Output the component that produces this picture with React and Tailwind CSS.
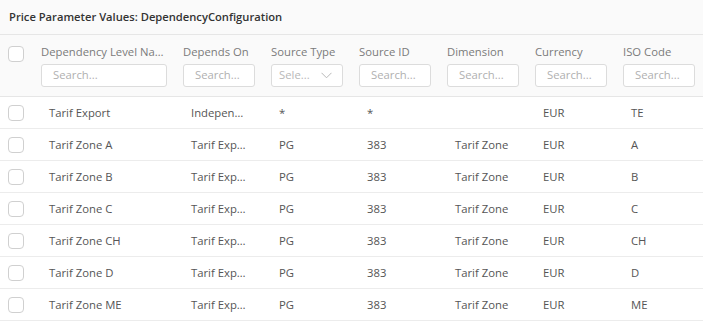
import React from "react";

const rows = [
  ["Tarif Export", "Independent", "*", "*", "", "EUR", "TE"],
  ["Tarif Zone A", "Tarif Export", "PG", "383", "Tarif Zone", "EUR", "A"],
  ["Tarif Zone B", "Tarif Export", "PG", "383", "Tarif Zone", "EUR", "B"],
  ["Tarif Zone C", "Tarif Export", "PG", "383", "Tarif Zone", "EUR", "C"],
  ["Tarif Zone CH", "Tarif Export", "PG", "383", "Tarif Zone", "EUR", "CH"],
  ["Tarif Zone D", "Tarif Export", "PG", "383", "Tarif Zone", "EUR", "D"],
  ["Tarif Zone ME", "Tarif Export", "PG", "383", "Tarif Zone", "EUR", "ME"],
];

const headers = ["Dependency Level Name", "Depends On", "Source Type", "Source ID", "Dimension", "Currency", "ISO Code"];

const grid = "grid grid-cols-[33px_142px_88px_88px_88px_88px_88px_88px]";

function Checkbox() {
  return <div className="w-4 h-4 rounded-[4px] border border-[#d0d0d0] bg-white" />;
}

function SearchBox() {
  return (
    <div className="h-[23px] w-full rounded-[3px] border border-[#dcdcdc] bg-white px-[11px] flex items-center text-[11.3px] text-[#b0b0b0] truncate">
      Search...
    </div>
  );
}

function SelectBox() {
  return (
    <div className="h-[23px] w-full rounded-[3px] border border-[#dcdcdc] bg-white pl-[7px] pr-[10px] flex items-center justify-between text-[11.3px] text-[#b8b8b8]">
      <span>Sele...</span>
      <svg width="11" height="7" viewBox="0 0 11 7" fill="none" stroke="#b8b8b8" strokeWidth="1">
        <path d="M0.5 0.8 L5.5 5.8 L10.5 0.8" />
      </svg>
    </div>
  );
}

export default function App() {
  return (
    <div className="w-[703px] h-[335px] bg-white text-[11.3px] overflow-hidden" style={{ fontFamily: '"Open Sans", "Noto Sans", sans-serif' }}>
      <div className="h-[35px] bg-[#fafafa] border-b border-[#e6e6e6] flex items-center px-[9px] pt-[1px] font-semibold text-[11.2px] text-[#333]">
        Price Parameter Values: DependencyConfiguration
      </div>
      <div className={`${grid} h-[62px] bg-[#fafafa] border-b border-[#e6e6e6]`}>
        <div className="flex justify-end pr-[9px] pt-[11px]">
          <Checkbox />
        </div>
        {headers.map((h, i) => (
          <div key={h} className="px-2 pt-[8px] flex flex-col gap-[3px] min-w-0">
            <div className="text-[#7a7a7a] truncate leading-[18px]">{h}</div>
            {i === 2 ? <SelectBox /> : <SearchBox />}
          </div>
        ))}
      </div>
      {rows.map((r, ri) => (
        <div key={ri} className={`${grid} h-[32px] border-b border-[#ececec] items-center`}>
          <div className="flex justify-end pr-[9px]">
            <Checkbox />
          </div>
          {r.map((c, ci) => (
            <div key={ci} className="px-4 pt-[2px] truncate text-[#555] min-w-0">
              {c}
            </div>
          ))}
        </div>
      ))}
    </div>
  );
}
